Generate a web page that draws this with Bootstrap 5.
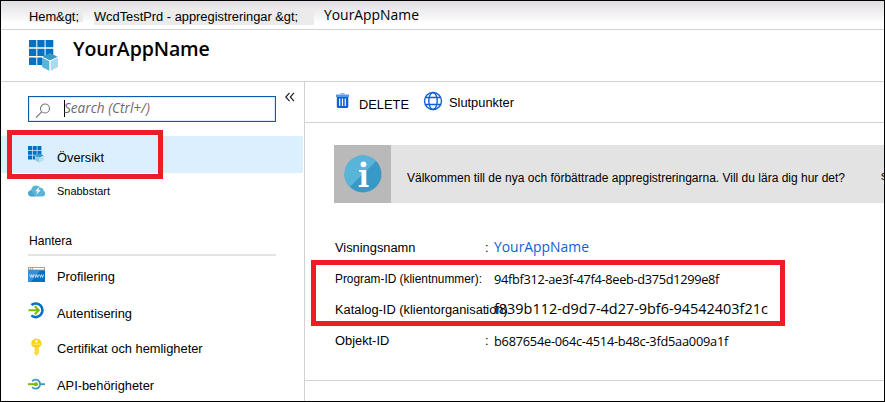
<!DOCTYPE html>
<html lang="sv">
<head>
<meta charset="utf-8">
<meta name="viewport" content="width=device-width, initial-scale=1">
<title>YourAppName</title>
<link href="https://cdn.jsdelivr.net/npm/bootstrap@5.3.0/dist/css/bootstrap.min.css" rel="stylesheet">
<style>
body{font-family:"Liberation Sans",Arial,sans-serif;font-size:12.85px;line-height:20px;color:#000;background:#fff}
svg{display:block;flex:none}
.portal{width:885px;height:402px;border:1px solid #000}
.segoe{font-family:"Open Sans","Noto Sans",sans-serif}
.crumbs{height:29px;padding-left:28px;background:linear-gradient(#dfdde0,#fff 22px);border-bottom:1px solid #d2d2d2}
.crumb{line-height:16px;background:#ebebeb}
.crumb-home{width:54px;margin-top:7px;height:14px;line-height:17px;margin-right:11px}
.crumb-app{width:220px;margin-top:8px;height:16px}
.crumb-current{font-size:13.9px;margin:4px 0 0 10px}
.titlebar{height:52px;padding:10px 0 0 27px;border-bottom:1px solid #d2d2d2}
.title{font-size:19.5px;font-weight:600;line-height:28px;letter-spacing:-.1px;margin:-5px 0 0 14px}
.side{width:304px;border-right:1px solid #d2d2d2}
.search{width:248px;height:26px;margin:14px 0 0 27px;border:1px solid #0a5cad;box-shadow:inset 0 0 0 1px #d9eafa}
.search input{border:0;outline:0;padding:0;margin-left:13px;width:190px;font-size:13.6px;font-style:italic;line-height:22px;height:22px;background:none}
.search input::placeholder{color:#6b6b6b;opacity:1}
.caret{width:1px;height:17px;background:#000;margin:3px -14px 0 13px}
.collapse-btn{margin:10px 0 0 9px}
.item{height:37px;padding:8px 0 0 27px;color:#000;text-decoration:none}
.item span{margin-left:11px}
.overview{background:#dcefff;margin:14px 1px 0 0;padding-top:9px}
.overview span{padding-top:3px}
.quick span{font-size:10.96px}
.lower{padding-top:3px}
.low{padding-top:1px}
.group{height:46px;margin:0 28px 0 27px;padding:21px 0 0 1px;border-bottom:2px solid #e3e3e3;font-size:12.1px}
.commands{height:41px;padding-left:31px;border-bottom:1px solid #d2d2d2}
.trash{margin-top:11px}
.cmd-delete{margin:13px 0 0 9px}
.globe{margin:9px 0 0 14px}
.cmd-endpoints{margin:11px 0 0 6px}
.banner{height:58px;margin:22px 0 0 29px;background:#e3e3e3;font-size:12px}
.banner-icon{width:57px;background:#b9b9b9}
.banner-text{margin:23px 0 0 16px}
.banner-more{margin:21px 0 0 36px}
.props{margin-left:30px;padding-top:35px;height:177px}
.prop{height:31px}
.prop-label{width:150px}
.prop-label-long{width:159px;font-size:11.86px}
.prop-sep{width:9px}
.app-link{font-size:13.9px;color:#0f5fd6;margin-top:-1px}
.guid{font-size:12.8px;letter-spacing:-.33px}
.guid-object{letter-spacing:-.25px}
.guid-tenant{font-size:14.43px;margin-top:-1px}
.foot{border-top:1px solid #d2d2d2}
.marker{position:absolute;border:5px solid #ee1c25;pointer-events:none}
.marker-nav{left:6px;top:129px;width:156px;height:49px}
.marker-ids{left:310px;top:259px;width:474px;height:66px}
</style>
<script src="https://cdn.jsdelivr.net/npm/bootstrap@5.3.0/dist/js/bootstrap.bundle.min.js"></script>
</head>
<body>
<div class="portal position-relative overflow-hidden d-flex flex-column text-nowrap">
  <nav class="crumbs d-flex align-items-start flex-shrink-0">
    <div class="crumb crumb-home">Hem&amp;gt;</div>
    <div class="crumb crumb-app">WcdTestPrd - appregistreringar &amp;gt;</div>
    <div class="crumb-current segoe">YourAppName</div>
  </nav>
  <header class="titlebar d-flex align-items-start flex-shrink-0">
    <svg width="31" height="32" viewBox="0 0 31 32"><path fill="#0072c6" d="M1 0h7.300v7.300H1zM9.300 0h7.300v7.300H9.300zM17.600 0h7.700v7.300h-7.700zM1 8.700h7.300V16H1zM9.300 8.700h7.300V16H9.300zM17.600 8.700h7.700V16h-7.700zM1 17.400h7.300v7.600H1zM9.300 17.400h7.300v7.600H9.300z"/><path fill="#3999c6" d="M22 13l8 4-8 4-8-4z"/><path fill="#59b4d9" d="M14 17l7.600 3.800V31L14 27z"/><path fill="#abdaee" d="M30 17l-7.600 3.800V31L30 27z"/><path d="M14 17l8 4 8-4M22 21v10" fill="none" stroke="#fff" stroke-width="1"/></svg>
    <h1 class="title segoe">YourAppName</h1>
  </header>
  <div class="d-flex flex-grow-1">
    <aside class="side flex-shrink-0">
      <div class="d-flex align-items-start">
        <div class="search d-flex align-items-start">
          <svg class="ms-1 mt-1" width="18" height="18" viewBox="0 0 18 18" fill="none" stroke="#777" stroke-width="1.1"><circle cx="12" cy="7.500" r="4.500"/><path d="M8.700 10.800L3 16.500"/></svg>
          <div class="caret"></div>
          <input class="segoe" type="text" placeholder="Search (Ctrl+/)" aria-label="Search">
        </div>
        <svg class="collapse-btn" width="10" height="10" viewBox="0 0 10 10" fill="none" stroke="#222" stroke-width="1.2"><path d="M4.500.8L.8 5l3.700 4.200M9 .8L5.300 5 9 9.200"/></svg>
      </div>
      <a class="item overview d-flex align-items-start" href="#"><svg width="18" height="18" viewBox="0 0 18 18"><path fill="#0072c6" d="M0 1h4v4H0zM4.700 1h4v4h-4zM9.400 1h4v4h-4zM0 5.700h4v4H0zM4.700 5.700h4v4h-4zM9.400 5.700h4v4h-4zM0 10.400h4v4H0zM4.700 10.400h4v4h-4z"/><path fill="#3999c6" d="M11.300 8.300l4.400 2.200-4.400 2.300-4.400-2.300z"/><path fill="#8fcbe6" d="M6.900 10.500l4.400 2.300v4.700l-4.400-2.200z"/><path fill="#b4def0" d="M15.700 10.500l-4.400 2.300v4.700l4.400-2.200z"/></svg><span>Översikt</span></a>
      <a class="item quick d-flex align-items-start" href="#"><svg width="18" height="18" viewBox="0 0 18 18"><path fill="#59b4d9" d="M3.500 15.500C1.300 15.500 0 14 0 12.300 0 10.500 1.500 9.200 3.100 9.200 3.300 6.500 5.500 4.500 8 4.500c1.800 0 3.300.8 4.200 2.300 2-.3 3.500 1.200 3.400 3 1 .4 1.600 1.400 1.600 2.600 0 1.800-1.200 3.100-2.900 3.100z"/><path fill="#3999c6" opacity=".55" d="M3.500 15.500C1.300 15.500 0 14 0 12.300 0 10.500 1.500 9.200 3.100 9.200L7 15.500z"/><path fill="#fff" d="M11.500 5.500L7.300 10.300h2.300L8 14l4.700-4.900h-2.300z"/></svg><span>Snabbstart</span></a>
      <div class="group">Hantera</div>
      <a class="item d-flex align-items-start" href="#"><svg width="18" height="18" viewBox="0 0 18 18"><path fill="#a0a1a2" d="M0 3h17v4H0z"/><path fill="#fff" d="M5 4h11v1.600H5zM1 4h1.200v1.300H1zM3 4h1.200v1.300H3z"/><path fill="#0072c6" d="M0 6.500h17V18H0z"/><path fill="#3a8fd3" d="M0 6.500h12L3 18H0z"/><path d="M1.800 10.500l1 3 1-3 1 3 1-3M6.700 10.500l1 3 1-3 1 3 1-3M11.600 10.500l1 3 1-3 1 3 1-3" stroke="#d9ecfa" stroke-width=".8" fill="none"/></svg><span class="lower">Profilering</span></a>
      <a class="item d-flex align-items-start" href="#"><svg width="18" height="18" viewBox="0 0 18 18" fill="none"><path d="M3.400 4A6.800 6.800 0 1 1 3.400 14.600" stroke="#0072c6" stroke-width="2.600"/><path d="M.5 9.300h10M6.800 5.300l4 4-4 4" stroke="#7fba00" stroke-width="2"/></svg><span class="lower">Autentisering</span></a>
      <a class="item d-flex align-items-start" href="#"><svg width="18" height="18" viewBox="0 0 18 18"><path fill="#fcd116" fill-rule="evenodd" d="M8.500.8c2.900 0 5.100 2 5.100 4.600 0 2-1.200 3.500-2.900 4.200v5.900l-2.200 2.200-2-2.200v-1.300l1-.9-1-.9v-1.200l.5-.8-.5-.8C4.600 8.900 3.300 7.400 3.300 5.400 3.300 2.800 5.600.8 8.500.8zM8.500 2a1.200 1.200 0 1 0 0 2.400A1.200 1.200 0 0 0 8.500 2z"/><path stroke="#ffe98a" d="M4.800 6.200h7.300M8.900 10v6"/></svg><span class="low">Certifikat och hemligheter</span></a>
      <a class="item d-flex align-items-start" href="#"><svg width="18" height="18" viewBox="0 0 18 18" fill="none"><path d="M4.200 6.300A4.500 4.500 0 1 1 4.200 12.100M12.500 9.200H17" stroke="#3999c6" stroke-width="1.800"/><path d="M0 9.200h8" stroke="#7fba00" stroke-width="2"/><circle cx="8" cy="9.200" r="2" fill="#7fba00"/></svg><span class="low">API-behörigheter</span></a>
    </aside>
    <main class="flex-grow-1 overflow-hidden">
      <div class="commands d-flex align-items-start">
        <svg class="trash" width="14" height="18" viewBox="0 0 14 18"><path fill="#8db8f0" d="M4.500 0h4v1.500h-4z"/><path fill="#5b97e8" d="M0 1.500h13V4H0z"/><path fill="#0f5fd6" d="M.8 4h11.500v9.500a1.500 1.500 0 0 1-1.500 1.500H2.300a1.500 1.500 0 0 1-1.500-1.500z"/><path stroke="#fff" stroke-width="1.200" d="M3.700 5.500v7.500M6.500 5.500v7.500M9.300 5.500v7.500"/></svg>
        <span class="cmd-delete">DELETE</span>
        <svg class="globe" width="20" height="20" viewBox="0 0 20 20" fill="none" stroke="#0f5fd6" stroke-width="1.400"><circle cx="10" cy="10" r="8.500"/><ellipse cx="10" cy="10" rx="4.200" ry="8.500"/><path d="M2.500 6.500h15M2.500 13.500h15"/></svg>
        <span class="cmd-endpoints">Slutpunkter</span>
      </div>
      <div class="banner d-flex align-items-start">
        <div class="banner-icon h-100 d-flex align-items-center justify-content-center flex-shrink-0"><svg width="38" height="38" viewBox="0 0 38 38"><circle cx="19" cy="19" r="18.500" fill="#3999c6"/><path fill="#59b4d9" d="M5.900 32.100A18.500 18.500 0 0 1 32.100 5.900z"/><circle cx="19.500" cy="9.300" r="2.900" fill="#fff"/><path fill="#fff" d="M15 15h7.300v14.800l2.400.5V32H14.800v-1.700l2.700-.5V17.200L15 16.500z"/></svg></div>
        <div class="banner-text flex-shrink-0">Välkommen till de nya och förbättrade appregistreringarna. Vill du lära dig hur det?</div>
        <div class="banner-more">s</div>
      </div>
      <div class="props">
        <div class="prop d-flex"><div class="prop-label">Visningsnamn</div><div class="prop-sep">:</div><a href="#" class="segoe app-link text-decoration-none">YourAppName</a></div>
        <div class="prop d-flex"><div class="prop-label prop-label-long">Program-ID (klientnummer):</div><div class="segoe guid">94fbf312-ae3f-47f4-8eeb-d375d1299e8f</div></div>
        <div class="prop d-flex"><div class="prop-label">Katalog-ID (klientorganisation)</div><div class="prop-sep">:</div><div class="segoe guid-tenant">f839b112-d9d7-4d27-9bf6-94542403f21c</div></div>
        <div class="prop d-flex"><div class="prop-label">Objekt-ID</div><div class="prop-sep">:</div><div class="segoe guid guid-object">b687654e-064c-4514-b48c-3fd5aa009a1f</div></div>
      </div>
      <div class="foot"></div>
    </main>
  </div>
  <div class="marker marker-nav"></div>
  <div class="marker marker-ids"></div>
</div>
</body>
</html>
